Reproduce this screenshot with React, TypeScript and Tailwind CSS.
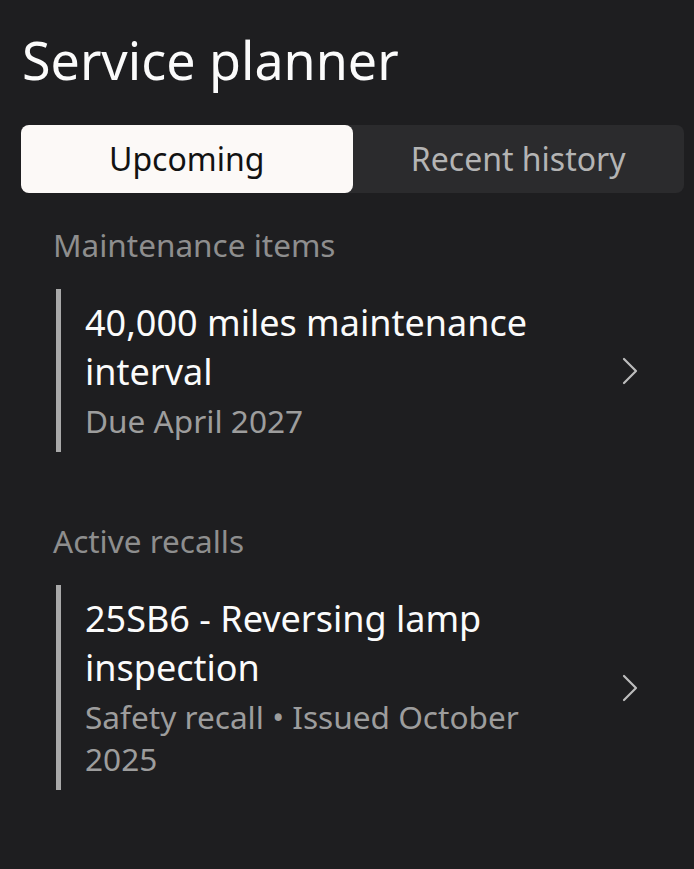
interface ServiceItemProps {
  title: string;
  subtitle: string;
}

function Chevron() {
  return (
    <svg width="16" height="28" viewBox="0 0 16 28" fill="none" className="text-[#bcbcbc]">
      <polyline
        points="2,2 14,14 2,26"
        stroke="currentColor"
        strokeWidth="2.2"
        strokeLinecap="round"
        strokeLinejoin="round"
      />
    </svg>
  );
}

function ServiceItem({ title, subtitle }: ServiceItemProps) {
  return (
    <button className="flex w-full items-center text-left pl-[35px] pr-[46px]">
      <div className="flex w-full items-center border-l-[5px] border-[#a9a9a9] pl-[24px]">
        <div className="flex-1 pr-[40px] pt-[9px] pb-[10px]">
          <div className="text-[36px] leading-[49px] text-[#fbfbfb]">{title}</div>
          <div className="mt-[4px] text-[31.6px] leading-[42px] text-[#9d9d9d]">{subtitle}</div>
        </div>
        <Chevron />
      </div>
    </button>
  );
}

export default function App() {
  return (
    <div
      className="min-h-[869px] bg-[#1e1e20] pl-[21px] pr-[10px] pt-[27px]"
      style={{ fontFamily: '"Noto Sans", sans-serif' }}
    >
      <h1 className="text-[52px] leading-[66px] text-[#fbfbfb] pl-[1px]">Service planner</h1>

      <div className="mt-[32px] flex h-[68px] rounded-[8px] bg-[#2b2b2d]">
        <div className="flex flex-1 items-center justify-center rounded-[8px] bg-[#fcf9f7] text-[32px] text-[#121212]">
          Upcoming
        </div>
        <div className="flex flex-1 items-center justify-center text-[32px] text-[#b4b4b4]">
          Recent history
        </div>
      </div>

      <div className="mt-[30px]">
        <h2 className="pl-[32px] text-[31.5px] leading-[44px] text-[#8e8e8e]">Maintenance items</h2>
        <div className="mt-[22px]">
          <ServiceItem title="40,000 miles maintenance interval" subtitle="Due April 2027" />
        </div>
      </div>

      <div className="mt-[67px]">
        <h2 className="pl-[32px] text-[31.5px] leading-[44px] text-[#8e8e8e]">Active recalls</h2>
        <div className="mt-[22px]">
          <ServiceItem
            title="25SB6 - Reversing lamp inspection"
            subtitle="Safety recall • Issued October 2025"
          />
        </div>
      </div>
    </div>
  );
}
